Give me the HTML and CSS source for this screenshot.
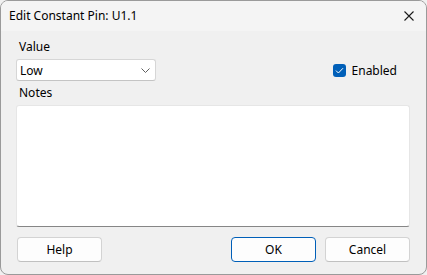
FILE: index.html
```html
<html>
  <head>
    <title>Edit Constant Pin</title>
    <link rel="stylesheet" href="styles.css">
  </head>
  <body>
    <div class="window">
      <div class="titlebar">
        <span class="title">Edit Constant Pin: U1.1</span>
        <svg class="closeIcon" width="10" height="10" viewBox="0 0 10 10">
          <path d="M0.5 0.5 L9.5 9.5 M9.5 0.5 L0.5 9.5" stroke="#1a1a1a" stroke-width="1.1" fill="none" />
        </svg>
      </div>
      <div class="content">
        <label class="fieldLabel">Value</label>
        <div class="valueRow">
          <div class="combo">
            <span>Low</span>
            <svg width="9" height="5" viewBox="0 0 9 5">
              <path d="M0.5 0.5 L4.5 4.5 L8.5 0.5" stroke="#5f5f5f" stroke-width="1" fill="none" />
            </svg>
          </div>
          <div class="check">
            <span class="box">
              <svg width="9" height="7" viewBox="0 0 9 7">
                <path d="M1 3.6 L3.4 6 L8 1.2" stroke="#ffffff" stroke-width="1" fill="none" />
              </svg>
            </span>
            <span>Enabled</span>
          </div>
        </div>
        <label class="fieldLabel notesLabel">Notes</label>
        <div class="notes"></div>
        <div class="buttons">
          <button class="btn">Help</button>
          <div class="rightBtns">
            <button class="btn btnDefault">OK</button>
            <button class="btn">Cancel</button>
          </div>
        </div>
      </div>
    </div>
  </body>
</html>
```

FILE: styles.css
```css
body {
  margin: 0;
  font-family: "Noto Sans", "Open Sans", sans-serif;
  font-size: 12px;
  color: #000;
  background-color: #f0f0f0;
}

.window {
  width: 427px;
  height: 275px;
  box-sizing: border-box;
  border: 1px solid #9a9a9a;
  border-radius: 8px;
  overflow: hidden;
  background-color: #f0f0f0;
  display: flex;
  flex-direction: column;
}

.titlebar {
  height: 30px;
  flex: none;
  display: flex;
  align-items: center;
  justify-content: space-between;
  padding: 0 12px 0 8px;
  background-color: #f4f4f4;
}
.title {
  line-height: 16px;
}

.content {
  flex: 1;
  display: flex;
  flex-direction: column;
  padding: 8px 16px 0 15px;
}

.fieldLabel {
  line-height: 16px;
  padding-left: 3px;
}

.valueRow {
  display: flex;
  align-items: center;
  justify-content: space-between;
  margin-top: 4px;
}

.combo {
  width: 140px;
  height: 22px;
  box-sizing: border-box;
  display: flex;
  align-items: center;
  justify-content: space-between;
  padding: 0 5px 0 3px;
  background-color: #fff;
  border: 1px solid #d6d6d6;
  border-bottom-color: #c4c4c4;
  border-radius: 3px;
}

.check {
  display: flex;
  align-items: center;
  gap: 6px;
  margin-right: 13px;
}
.box {
  width: 13px;
  height: 13px;
  border-radius: 3px;
  background-color: #005fb8;
  display: flex;
  align-items: center;
  justify-content: center;
}

.notesLabel {
  margin-top: 4px;
}

.notes {
  height: 122px;
  box-sizing: border-box;
  margin-top: 4px;
  background-color: #fff;
  border: 1px solid #e6e6e6;
  border-bottom: 1px solid #868686;
  border-radius: 3px;
}

.buttons {
  display: flex;
  justify-content: space-between;
  margin-top: 10px;
  padding-left: 1px;
}
.rightBtns {
  display: flex;
  gap: 9px;
}

.btn {
  width: 85px;
  height: 25px;
  box-sizing: border-box;
  font-family: inherit;
  font-size: 12px;
  color: #000;
  background-color: #fdfdfd;
  border: 1px solid #d3d3d3;
  border-bottom-color: #c0c0c0;
  border-radius: 4px;
  padding: 0;
}
.btnDefault {
  border: 1px solid #005fb8;
}
```
